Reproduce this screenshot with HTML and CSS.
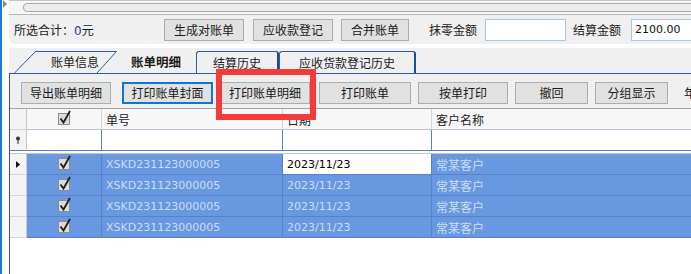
FILE: index.html
```html
<!DOCTYPE html>
<html lang="zh-CN">
<head>
  <meta charset="UTF-8">
  <title>账单明细</title>
  <link rel="stylesheet" href="styles.css">
</head>
<body>

<div class="window">
  <div class="gutter">
    <svg class="corner" width="5" height="8" viewBox="0 0 5 8"><path d="M0 0 L4 4 L0 8 Z" fill="#8a8a8a"/></svg>
  </div>

  <div class="main">
    <div class="topbar">
      <svg class="arrow-left" width="4" height="7" viewBox="0 0 4 7"><path d="M4 0 L0 3.5 L4 7 Z" fill="#7a7a7a"/></svg>
      <div class="thumb"></div>
    </div>

    <div class="sumbar">
      <span class="sum-label">所选合计：<span class="num">0</span>元</span>
      <button class="btn b-make">生成对账单</button>
      <button class="btn b-reg">应收款登记</button>
      <button class="btn b-merge">合并账单</button>
      <span class="field-label l-round">抹零金额</span>
      <input class="field i-round" type="text" value="">
      <span class="field-label l-total">结算金额</span>
      <input class="field i-total num" type="text" value="2100.00">
    </div>

    <div class="spacer"></div>

    <div class="tabstrip">
      <div class="tab tab-slant">账单信息</div>
      <div class="tab tab-active">账单明细</div>
      <div class="tab tab-round t-hist">结算历史</div>
      <div class="tab tab-round t-reg">应收货款登记历史</div>
    </div>

    <div class="panel">
      <div class="toolbar">
        <button class="btn t-export">导出账单明细</button>
        <button class="btn btn-focus t-cover">打印账单封面</button>
        <button class="btn t-detail">打印账单明细</button>
        <button class="btn t-print">打印账单</button>
        <button class="btn t-byone">按单打印</button>
        <button class="btn t-undo">撤回</button>
        <button class="btn t-group">分组显示</button>
        <span class="tool-label">年</span>
      </div>

      <div class="grid">
        <div class="cell ind head"></div>
        <div class="cell head center">
          <svg class="check" width="15" height="15" viewBox="0 0 15 15"><rect x="1.5" y="3.5" width="11" height="11" fill="#dcdcdc" stroke="#8c8c8c"/><path d="M3.5 8.5 L6.5 12.5 L13 1" fill="none" stroke="#1e1e1e" stroke-width="1.8"/></svg>
        </div>
        <div class="cell head">单号</div>
        <div class="cell head">日期</div>
        <div class="cell head last">客户名称</div>

        <div class="cell ind filter">
          <svg width="6" height="8" viewBox="0 0 6 8"><circle cx="3" cy="2.5" r="2" fill="#333"/><path d="M3 4 V8" stroke="#333" stroke-width="1"/></svg>
        </div>
        <div class="cell filter"></div>
        <div class="cell filter"></div>
        <div class="cell filter"></div>
        <div class="cell filter last"></div>

        <div class="sep"></div>

        <div class="cell ind row">
          <svg width="4" height="7" viewBox="0 0 4 7"><path d="M0 0 L4 3.5 L0 7 Z" fill="#111"/></svg>
        </div>
        <div class="cell sel center"><svg class="check" width="15" height="15" viewBox="0 0 15 15"><rect x="1.5" y="3.5" width="11" height="11" fill="#dcdcdc" stroke="#8c8c8c"/><path d="M3.5 8.5 L6.5 12.5 L13 1" fill="none" stroke="#1e1e1e" stroke-width="1.8"/></svg></div>
        <div class="cell sel num">XSKD231123000005</div>
        <div class="cell focus num">2023/11/23</div>
        <div class="cell sel last">常某客户</div>

        <div class="cell ind row"></div>
        <div class="cell sel center"><svg class="check" width="15" height="15" viewBox="0 0 15 15"><rect x="1.5" y="3.5" width="11" height="11" fill="#dcdcdc" stroke="#8c8c8c"/><path d="M3.5 8.5 L6.5 12.5 L13 1" fill="none" stroke="#1e1e1e" stroke-width="1.8"/></svg></div>
        <div class="cell sel num">XSKD231123000005</div>
        <div class="cell sel num">2023/11/23</div>
        <div class="cell sel last">常某客户</div>

        <div class="cell ind row"></div>
        <div class="cell sel center"><svg class="check" width="15" height="15" viewBox="0 0 15 15"><rect x="1.5" y="3.5" width="11" height="11" fill="#dcdcdc" stroke="#8c8c8c"/><path d="M3.5 8.5 L6.5 12.5 L13 1" fill="none" stroke="#1e1e1e" stroke-width="1.8"/></svg></div>
        <div class="cell sel num">XSKD231123000005</div>
        <div class="cell sel num">2023/11/23</div>
        <div class="cell sel last">常某客户</div>

        <div class="cell ind row"></div>
        <div class="cell sel center"><svg class="check" width="15" height="15" viewBox="0 0 15 15"><rect x="1.5" y="3.5" width="11" height="11" fill="#dcdcdc" stroke="#8c8c8c"/><path d="M3.5 8.5 L6.5 12.5 L13 1" fill="none" stroke="#1e1e1e" stroke-width="1.8"/></svg></div>
        <div class="cell sel num">XSKD231123000005</div>
        <div class="cell sel num">2023/11/23</div>
        <div class="cell sel last">常某客户</div>
      </div>
    </div>
  </div>

  <!-- highlight drawn over the toolbar -->
  <div class="highlight"></div>
</div>

</body>
</html>
```

FILE: styles.css
```css
body {
  margin: 0;
  font-family: "Noto Sans CJK SC", sans-serif;
  font-size: 12px;
  color: #1a1a1a;
  background: #fff;
  overflow: hidden;
}
.window {
  position: relative;
  display: flex;
  width: 691px;
  height: 274px;
  border-left: 2px solid #1a7cd8;
  box-sizing: border-box;
  overflow: hidden;
}
.gutter {
  width: 7px;
  flex: none;
}
.corner {
  display: block;
  margin: 0 0 0 1px;
}
.main {
  flex: 1;
  display: flex;
  flex-direction: column;
  min-width: 0;
}
.num {
  font-family: "DejaVu Sans", sans-serif;
  font-size: 11px;
}

/* top scroll strip */
.topbar {
  height: 15px;
  flex: none;
  display: flex;
  align-items: center;
  background: #f6f6f6;
  border-top: 1px solid #c4c4c4;
  border-bottom: 1px solid #b8b8b8;
  box-sizing: border-box;
}
.arrow-left {
  margin-left: 7px;
}
.thumb {
  flex: none;
  width: 700px;
  height: 7px;
  margin-left: 7px;
  border: 1px solid #a9a9a9;
  border-radius: 4px;
  background: #ececec;
}

/* sum bar */
.sumbar {
  height: 29px;
  flex: none;
  display: flex;
  align-items: center;
  background: #f0f0f0;
  border-bottom-left-radius: 6px;
  white-space: nowrap;
}
.sum-label {
  width: 155px;
  flex: none;
  padding-left: 5px;
  box-sizing: border-box;
}
.sum-label .num {
  color: #1c3f94;
  font-size: 12px;
}
.btn {
  flex: none;
  height: 22px;
  padding: 0;
  border: 1px solid #adadad;
  background: #e1e1e1;
  font-family: "Noto Sans CJK SC", sans-serif;
  font-size: 12px;
  color: #1a1a1a;
  line-height: 18px;
}
.btn-focus {
  border: 2px solid #0a78d6;
}
.b-make { width: 80px; }
.b-reg { width: 80px; margin-left: 9px; }
.b-merge { width: 68px; margin-left: 8px; }
.field-label {
  flex: none;
}
.l-round { margin-left: 20px; }
.l-total { margin-left: 7px; }
.field {
  flex: none;
  height: 22px;
  box-sizing: border-box;
  border: 1px solid #a8c6e8;
  background: #fff;
  padding: 0 3px;
}
.i-round { width: 81px; margin-left: 8px; }
.i-total { width: 70px; margin-left: 10px; color: #111; }

.spacer {
  height: 4px;
  flex: none;
  background: #fff;
}

/* tabs */
.tabstrip {
  height: 25px;
  flex: none;
  display: flex;
  align-items: flex-end;
  padding-left: 5px;
  background: #f0f0f0;
  white-space: nowrap;
}
.tab {
  flex: none;
  height: 22px;
  box-sizing: border-box;
  line-height: 22px;
}
.tab-slant {
  width: 103px;
  padding-left: 37px;
  background: url("data:image/svg+xml;utf8,<svg xmlns='http://www.w3.org/2000/svg' width='103' height='22'><path d='M0.5 22 L21.5 0.5 L102.5 0.5 L83 22' fill='none' stroke='%232c5aa8' stroke-width='1'/></svg>") no-repeat;
}
.tab-active {
  width: 99px;
  margin-left: -20px;
  padding-left: 34px;
  font-weight: bold;
  font-size: 12.5px;
}
.tab-round {
  text-align: center;
  border: 1px solid #2c5aa8;
  border-right: 2px solid #1d4a9c;
  border-bottom: none;
  border-radius: 3px 3px 0 0;
}
.t-hist { width: 83px; }
.t-reg { width: 137px; }

/* content panel */
.panel {
  flex: 1;
  display: flex;
  flex-direction: column;
  border-top: 1px solid #2c5aa8;
  border-left: 1px solid #2c5aa8;
  background: #f0f0f0;
}
.toolbar {
  height: 34px;
  flex: none;
  display: flex;
  align-items: flex-start;
  padding: 8px 0 0 11px;
  box-sizing: border-box;
  white-space: nowrap;
}
.t-export { width: 90px; }
.t-cover { width: 91px; margin-left: 11px; }
.t-detail { width: 90px; margin-left: 7px; }
.t-print { width: 92px; margin-left: 9px; }
.t-byone { width: 90px; margin-left: 7px; }
.t-undo { width: 73px; margin-left: 7px; }
.t-group { width: 73px; margin-left: 7px; }
.tool-label {
  margin-left: 16px;
  line-height: 22px;
}

/* data grid */
.grid {
  flex: 1;
  display: grid;
  grid-template-columns: 17px 75px 181px 149px 1fr;
  grid-template-rows: 21px 21px 3px repeat(4, 21px);
  align-content: start;
  background: #fff;
  border-top: 1px solid #a4a4a4;
}
.cell {
  display: flex;
  align-items: center;
  padding-left: 4px;
  box-sizing: border-box;
  white-space: nowrap;
  overflow: hidden;
}
.cell.center {
  justify-content: center;
  padding-left: 0;
}
.cell.ind {
  justify-content: center;
  padding-left: 0;
  background: #f4f4f4;
  border-right: 1px solid #c9c9c9;
  border-bottom: 1px solid #d6d6d6;
}
.head {
  background: #f7f7f7;
  border-right: 1px solid #d4d4d4;
  border-bottom: 1px solid #b7c3dc;
  color: #222;
}
.filter {
  background: #fff;
  border-right: 1px solid #5c7fcb;
  border-bottom: 1px solid #5c7fcb;
}
.cell.ind.filter {
  border-bottom: 1px solid #5c7fcb;
}
.sep {
  grid-column: 1 / -1;
  background: #fff;
  border-bottom: 1px solid #c8c8c8;
  box-sizing: border-box;
}
.sel {
  background: #6898e0;
  color: #cddcf6;
  border-right: 1px solid #5a80cc;
  border-bottom: 1px solid #5a80cc;
}
.focus {
  background: #fff;
  color: #000;
  border-right: 1px solid #5a80cc;
  border-bottom: 1px solid #5a80cc;
}
.cell.last {
  border-right: none;
}
.check {
  display: block;
  margin-top: -3px;
}

/* red highlight over the toolbar */
.highlight {
  position: absolute;
  left: 214px;
  top: 69px;
  width: 100px;
  height: 51px;
  border: 6px solid #f43b3b;
  box-sizing: border-box;
}
```
